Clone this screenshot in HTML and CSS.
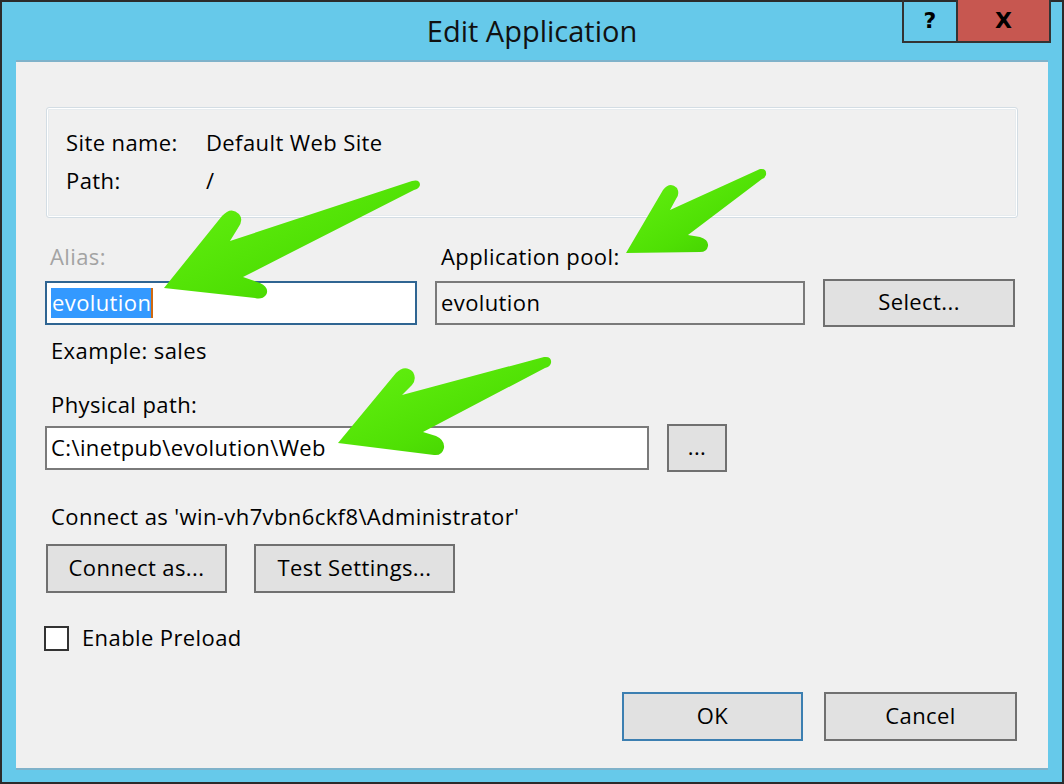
FILE: index.html
```html
<!DOCTYPE html>
<html lang="en">

<head>
  <meta charset="UTF-8">
  <meta name="viewport" content="width=device-width, initial-scale=1.0">
  <title>Edit Application</title>
  <link rel="stylesheet" href="styles.css">
</head>

<body>
  <div class="window">
    <div class="titlebar">
      <span class="title">Edit Application</span>
      <div class="caption-buttons">
        <span class="cap-btn help">?</span>
        <span class="cap-btn close">X</span>
      </div>
    </div>

    <div class="client">
      <div class="groupbox">
        <div class="info-row"><span class="info-key">Site name:</span><span>Default Web Site</span></div>
        <div class="info-row"><span class="info-key">Path:</span><span>/</span></div>
      </div>

      <div class="field-labels">
        <label class="col-alias disabled">Alias:</label>
        <label class="col-pool">Application pool:</label>
      </div>
      <div class="field-row">
        <div class="textbox col-alias focused"><span class="selected">evolution</span><span class="caret"></span></div>
        <div class="textbox col-pool readonly">evolution</div>
        <button class="btn btn-select">Select...</button>
      </div>

      <p class="hint">Example: sales</p>

      <p class="label-path">Physical path:</p>
      <div class="path-row">
        <div class="textbox path-box">C:\inetpub\evolution\Web</div>
        <button class="btn btn-browse">...</button>
      </div>

      <p class="connect-text">Connect as 'win-vh7vbn6ckf8\Administrator'</p>
      <div class="connect-row">
        <button class="btn btn-connect">Connect as...</button>
        <button class="btn btn-test">Test Settings...</button>
      </div>

      <div class="check-row">
        <span class="checkbox"></span>
        <span class="check-label">Enable Preload</span>
      </div>

      <div class="dialog-buttons">
        <button class="btn btn-ok">OK</button>
        <button class="btn btn-cancel">Cancel</button>
      </div>
    </div>
  </div>

  <!-- green callout arrows drawn on top of the dialog -->
  <svg class="arrows" width="1064" height="784" viewBox="0 0 1064 784">
    <defs>
      <linearGradient id="green" x1="0" y1="0" x2="1" y2="1">
        <stop offset="0" stop-color="#66f212" />
        <stop offset="0.6" stop-color="#4fe004" />
        <stop offset="1" stop-color="#3fc800" />
      </linearGradient>
    </defs>
    <path fill="url(#green)" d="M164,288 L222,216 Q231,206 239,214 Q244,220 238,228 L230,241 L412,181 Q420,179 420,185 Q419,189 414,190 L243,277 L260,283 Q270,288 266,295 Q262,300 255,298 Z" />
    <path fill="url(#green)" d="M626,253 L663,190 Q670,181 677,188 Q680,194 676,199 L670,210 L760,169 Q767,168 766,175 Q765,178 762,179 L688,235 L700,237 Q709,240 708,246 Q707,252 700,252 Z" />
    <path fill="url(#green)" d="M338,443 L396,373 Q405,364 413,372 Q417,379 412,385 L402,395 L544,357 Q552,356 551,363 Q550,367 545,368 L423,432 L436,436 Q445,440 444,448 Q442,456 434,455 Z" />
  </svg>
</body>
</html>
```

FILE: styles.css
```css
:root {
  --frame: #66c9ea;
  --frame-edge: #2b2b2b;
  --face: #f0f0f0;
  --btn-face: #e1e1e1;
  --btn-border: #707070;
  --focus-blue: #3c7fb1;
  --text: #000;
}

* {
  box-sizing: border-box;
}

body {
  margin: 0;
  font-family: 'Open Sans', 'Noto Sans', sans-serif;
  font-size: 22px;
  letter-spacing: 0.4px;
  color: var(--text);
  position: relative;
}

p {
  margin: 0;
}

.window {
  width: 1064px;
  height: 784px;
  background: var(--frame);
  border: 2px solid var(--frame-edge);
  display: flex;
  flex-direction: column;
}

/* title bar */
.titlebar {
  position: relative;
  height: 58px;
  flex-shrink: 0;
  text-align: center;
}

.title {
  display: inline-block;
  margin-top: 8px;
  font-size: 29px;
  line-height: 42px;
  letter-spacing: 0;
  color: #111;
}

.caption-buttons {
  position: absolute;
  top: -2px;
  right: 11px;
  display: flex;
  border: 2px solid #333;
  border-top: none;
  height: 43px;
}

.cap-btn {
  display: flex;
  align-items: center;
  justify-content: center;
  font-family: 'DejaVu Sans', sans-serif;
  font-weight: bold;
  font-size: 22px;
  letter-spacing: 0;
  color: #000;
}

.cap-btn.help {
  width: 54px;
  border-right: 2px solid #333;
}

.cap-btn.close {
  width: 91px;
  background: #c75750;
}

/* dialog body */
.client {
  flex: 1;
  margin: 0 14px 12px 14px;
  background: var(--face);
  border-top: 2px solid #7fb2ca;
  border-bottom: 2px solid #7fb2ca;
  padding-top: 45px;
}

.groupbox {
  margin: 0 30px;
  height: 111px;
  border: 1px solid #d3dde4;
  border-radius: 3px;
  box-shadow: inset 0 0 0 1px #fff, inset 0 0 0 2px #e6ebee;
  padding: 15px 0 0 19px;
}

.info-row {
  display: flex;
  height: 38px;
  align-items: center;
}

.info-key {
  width: 140px;
}

.field-labels {
  display: flex;
  margin-top: 26px;
  height: 24px;
  line-height: 24px;
}

.field-labels .col-alias {
  margin-left: 34px;
  width: 391px;
}

.disabled {
  color: #a3a3a3;
}

.field-row {
  display: flex;
  align-items: center;
  margin-top: 11px;
  margin-left: 29px;
  gap: 18px;
}

.textbox {
  height: 44px;
  border: 2px solid #7a7a7a;
  background: #fff;
  display: flex;
  align-items: center;
  padding: 0 0 3px 4px;
  white-space: nowrap;
}

.textbox.col-alias {
  width: 372px;
  border-color: #2f6592;
  padding-bottom: 1px;
}

.textbox.col-pool {
  width: 370px;
}

.textbox.readonly {
  background: var(--face);
}

.selected {
  background: #3399ff;
  color: #fff;
  line-height: 28px;
  padding-left: 1px;
  padding-bottom: 2px;
}

.caret {
  width: 2px;
  height: 30px;
  background: #d06a10;
}

.btn {
  font: inherit;
  letter-spacing: inherit;
  color: var(--text);
  background: var(--btn-face);
  border: 2px solid var(--btn-border);
  padding: 0 0 4px 0;
  height: 48px;
}

.btn-select {
  width: 192px;
}

.hint {
  margin: 11px 0 0 35px;
  line-height: 24px;
}

.label-path {
  margin: 30px 0 0 35px;
  line-height: 24px;
}

.path-row {
  display: flex;
  align-items: center;
  gap: 18px;
  margin: 8px 0 0 29px;
  height: 48px;
}

.path-box {
  width: 604px;
}

.btn-browse {
  width: 60px;
}

.connect-text {
  margin: 32px 0 0 35px;
  line-height: 24px;
}

.connect-row {
  display: flex;
  gap: 27px;
  margin: 16px 0 0 30px;
}

.connect-row .btn {
  height: 49px;
}

.btn-connect {
  width: 181px;
}

.btn-test {
  width: 201px;
}

.check-row {
  display: flex;
  align-items: center;
  gap: 13px;
  margin: 33px 0 0 28px;
  height: 25px;
}

.check-label {
  padding-bottom: 4px;
}

.checkbox {
  width: 25px;
  height: 25px;
  border: 2px solid #333;
  background: #fff;
}

.dialog-buttons {
  display: flex;
  justify-content: flex-end;
  gap: 21px;
  margin: 41px 31px 0 0;
}

.dialog-buttons .btn {
  height: 49px;
}

.btn-ok {
  width: 181px;
  border-color: var(--focus-blue);
}

.btn-cancel {
  width: 193px;
}

.arrows {
  position: absolute;
  top: 0;
  left: 0;
  pointer-events: none;
}
```
